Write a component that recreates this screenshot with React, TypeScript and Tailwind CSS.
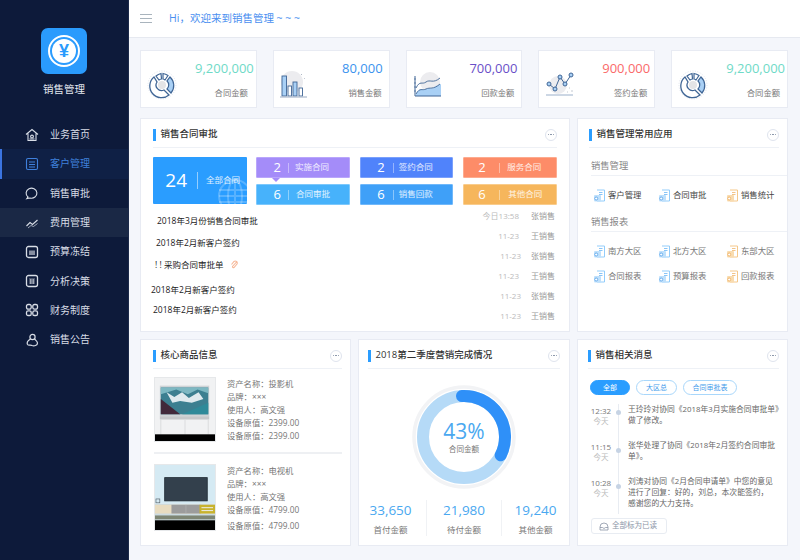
import type { ReactNode } from "react";

const cn = "font-['Open_Sans','Noto_Sans_CJK_SC',sans-serif]";

const Gauge = () => (
  <svg width="30" height="30" viewBox="0 0 30 30" fill="none">
    <circle cx="15" cy="15" r="14" stroke="#c9d2e0" strokeWidth="0.6" strokeDasharray="1 1.5" />
    <path d="M7 7 A11.5 11.5 0 0 0 22 25 L17 20 A5.5 5.5 0 0 1 10 12 Z" stroke="#3f6595" strokeWidth="1.3" fill="#fff" />
    <path d="M9 6 A11.5 11.5 0 0 1 14 3.5 L14.5 9 A5.5 5.5 0 0 0 12 10 Z" stroke="#3f6595" strokeWidth="1.2" />
    <path d="M16 3.5 A11.5 11.5 0 0 1 21 5.5 L18 10 A5.5 5.5 0 0 0 16 9 Z" stroke="#3f6595" strokeWidth="1.2" />
    <path d="M23 7 A11.5 11.5 0 0 1 24 23 L20 19 A5.5 5.5 0 0 0 20 11 Z" stroke="#3f6595" strokeWidth="1.2" fill="#a9d0f5" />
    <circle cx="15" cy="15" r="4" fill="#e4e4e6" />
  </svg>
);

const Bars = () => (
  <svg width="30" height="30" viewBox="3 0 30 30" fill="none">
    <circle cx="15" cy="12" r="11" fill="#ececef" />
    <path d="M24 4l.8.8M27 8l.6.6" stroke="#9aa7b8" strokeWidth="1" />
    <rect x="5" y="6" width="4.5" height="20" fill="#a9d0f5" stroke="#3f6595" strokeWidth="0.9" />
    <rect x="11" y="16" width="3.5" height="10" fill="#fff" stroke="#3f6595" strokeWidth="0.9" />
    <rect x="16" y="12" width="4" height="14" fill="#a9d0f5" stroke="#3f6595" strokeWidth="0.9" />
    <rect x="22" y="18" width="3.5" height="8" fill="#fff" stroke="#3f6595" strokeWidth="0.9" />
    <path d="M3 27h27" stroke="#aab8cc" strokeWidth="1.2" />
  </svg>
);

const Area = () => (
  <svg width="30" height="30" viewBox="0 0 30 30" fill="none">
    <circle cx="17" cy="12" r="10" fill="#ececef" />
    <path d="M3 24 C7 17 9 21 13 19 C17 17 20 20 23 16 L28 14 V26 H3 Z" fill="#a9d0f5" />
    <path d="M3 18 C7 10 9 15 13 12 C17 9 20 14 27 8" stroke="#3f6595" strokeWidth="0.9" />
    <path d="M3 24 C7 17 9 21 13 19 C17 17 20 20 27 14" stroke="#3f6595" strokeWidth="0.9" />
    <path d="M2 6 V26 H28" stroke="#3f6595" strokeWidth="1" />
    <path d="M1 9h2M1 13h2M1 17h2M1 21h2" stroke="#3f6595" strokeWidth="0.7" />
  </svg>
);

const Dots = () => (
  <svg width="30" height="30" viewBox="0 0 30 30" fill="none">
    <circle cx="13" cy="15" r="9" fill="#ececef" />
    <path d="M4 14 L10 19 L15 7 L20 14 L26 5" stroke="#3f6595" strokeWidth="1" />
    <circle cx="4" cy="14" r="2" fill="#a9d0f5" stroke="#3f6595" />
    <circle cx="10" cy="19" r="2" fill="#a9d0f5" stroke="#3f6595" />
    <circle cx="15" cy="7" r="2" fill="#a9d0f5" stroke="#3f6595" />
    <circle cx="20" cy="14" r="2" fill="#a9d0f5" stroke="#3f6595" />
    <circle cx="26" cy="5" r="2" fill="#a9d0f5" stroke="#3f6595" />
    <path d="M1 25h27" stroke="#8fa6c4" strokeWidth="0.9" />
    <path d="M24 18h1M26 21h2M22 22h1" stroke="#b5bcc8" strokeWidth="0.8" />
  </svg>
);

const stats = [
  { v: "9,200,000", c: "text-[#6fdac7]", l: "合同金额", icon: <Gauge />, pr: "pr-[2px]", lp: "pr-[6px]" },
  { v: "80,000", c: "text-[#3b93ee]", l: "销售金额", icon: <Bars />, pr: "pr-[6px]", lp: "pr-[1px]" },
  { v: "700,000", c: "text-[#6a4fc8]", l: "回款金额", icon: <Area />, pr: "pr-[4px]", lp: "pr-[3px]" },
  { v: "900,000", c: "text-[#fa6a6a]", l: "签约金额", icon: <Dots />, pr: "pr-[4px]", lp: "pr-[3px]" },
  { v: "9,200,000", c: "text-[#6fdac7]", l: "合同金额", icon: <Gauge />, pr: "pr-[2px]", lp: "pr-[5px]" },
];

const s = { width: 14, height: 14, viewBox: "0 0 14 14", fill: "none", stroke: "currentColor", strokeWidth: 1.1 };

const menu: { t: string; icon: ReactNode; cls?: string }[] = [
  {
    t: "业务首页",
    icon: (
      <svg {...s}>
        <path d="M1 6.5 L7 1.5 L13 6.5 M3 5.5 V12.5 H11 V5.5" />
        <circle cx="7" cy="8.5" r="1.4" />
        <path d="M4.5 11h5" />
      </svg>
    ),
  },
  {
    t: "客户管理",
    cls: "bg-[#0f2045] text-[#3f80dc] border-l-2 border-[#3b74e0] pl-[23px]",
    icon: (
      <svg {...s}>
        <rect x="1.5" y="1.5" width="11" height="11" rx="1.5" />
        <path d="M4 5h6M4 7.5h6M4 10h6" />
      </svg>
    ),
  },
  {
    t: "销售审批",
    cls: "pl-[25px]",
    icon: (
      <svg {...s}>
        <path d="M3 11 A5.4 5 0 1 1 5 12 L1.8 12.6 Z" />
      </svg>
    ),
  },
  {
    t: "费用管理",
    cls: "bg-[#1a2845] pl-[25px]",
    icon: (
      <svg {...s}>
        <path d="M1.5 10 L5 6.5 L7.5 8.5 L12.5 4" />
        <path d="M3 12 L6 9.5 L8.5 10.5 L12.5 7.5" strokeWidth="0.7" />
      </svg>
    ),
  },
  {
    t: "预算冻结",
    cls: "pl-[25px]",
    icon: (
      <svg {...s}>
        <rect x="1.5" y="1.5" width="11" height="11" rx="2" strokeWidth="1.3" />
        <rect x="4" y="5.5" width="6" height="4.5" fill="currentColor" stroke="none" opacity=".6" />
      </svg>
    ),
  },
  {
    t: "分析决策",
    cls: "pl-[25px]",
    icon: (
      <svg {...s}>
        <rect x="1.5" y="1.5" width="11" height="11" rx="2" strokeWidth="1.3" />
        <path d="M4 5h6M4 7h6M4 9h6M5.5 5v5M7 5v5M8.5 5v5" strokeWidth="0.6" />
      </svg>
    ),
  },
  {
    t: "财务制度",
    cls: "pl-[25px]",
    icon: (
      <svg {...s} strokeWidth={1.3}>
        <rect x="1.5" y="1.5" width="4.7" height="4.7" rx="1.6" />
        <rect x="7.8" y="1.5" width="4.7" height="4.7" rx="1.6" />
        <rect x="1.5" y="7.8" width="4.7" height="4.7" rx="1.6" />
        <rect x="7.8" y="7.8" width="4.7" height="4.7" rx="1.6" />
      </svg>
    ),
  },
  {
    t: "销售公告",
    cls: "pl-[25px]",
    icon: (
      <svg {...s} strokeWidth={1.2}>
        <circle cx="7.5" cy="4" r="2.6" />
        <path d="M5.5 6 C3 7.5 1.5 9.5 2.5 11.5 C3.5 12.8 5.5 11.5 7 12.5 C9 13.5 12.5 12.5 12.5 10 C12.5 8.5 11 7.5 9.5 6" />
      </svg>
    ),
  },
];

const Card = ({ title, children, className = "", mx = "mx-3" }: { title: string; children: ReactNode; className?: string; mx?: string }) => (
  <div className={"bg-white border border-[#e8ebf3] " + className}>
    <div className={"flex items-center justify-between h-[29px] pt-[3px] border-b border-[#eef1f6] " + mx}>
      <div className="flex items-center">
        <span className="w-[3px] h-[12px] bg-[#2a9dff] mr-[4.5px]" />
        <span className="text-[9.5px] font-medium text-[#333]">{title}</span>
      </div>
      <span className="w-[12px] h-[12px] rounded-full border border-[#dfe4ee] text-[#7d8aa0] flex items-center justify-center gap-[1px]">
        <i className="w-[1.5px] h-[1.5px] rounded-full bg-current" />
        <i className="w-[1.5px] h-[1.5px] rounded-full bg-current" />
        <i className="w-[1.5px] h-[1.5px] rounded-full bg-current" />
      </span>
    </div>
    {children}
  </div>
);

const tiles = [
  { n: "2", t: "实施合同", c: "bg-[#a48cf9] border-[#b9a6fb]", a: "w-[31px] text-right pr-[7px]", b: "ml-[6px]" },
  { n: "2", t: "签约合同", c: "bg-[#5083fb] border-[#7aa0fc]", a: "w-[32px] text-right pr-[8px]", b: "ml-[5px]" },
  { n: "2", t: "服务合同", c: "bg-[#fd8c68] border-[#fdab8f]", a: "w-[35px] text-left pl-[14px]", b: "ml-[7px]" },
  { n: "6", t: "合同审批", c: "bg-[#47b2fb] border-[#7cc8fc]", a: "w-[31px] text-right pr-[7px]", b: "ml-[7px]" },
  { n: "6", t: "销售回款", c: "bg-[#3fa0f8] border-[#70b8fa]", a: "w-[32px] text-right pr-[8px]", b: "ml-[5px]" },
  { n: "6", t: "其他合同", c: "bg-[#f6b65c] border-[#f9cc8c]", a: "w-[35px] text-left pl-[14px]", b: "ml-[8px]" },
];

const leftRows = [
  { t: "2018年3月份销售合同审批", c: "ml-[16px] mt-[9px]" },
  { t: "2018年2月新客户签约", c: "ml-[15px] mt-[9px]" },
  { t: "! ! 采购合同审批单", c: "ml-[14px] mt-[9px]", clip: true },
  { t: "2018年2月新客户签约", c: "ml-[10px] mt-[12px]" },
  { t: "2018年2月新客户签约", c: "ml-[12px] mt-[7px]" },
];

const rightRows = [
  { d: "今日13:58", n: "张销售", w: "pr-[12px]" },
  { d: "11-23", n: "王销售", w: "pr-[12px]" },
  { d: "11-23", n: "张销售", w: "pr-[10px]" },
  { d: "11-23", n: "王销售", w: "pr-[12px]" },
  { d: "11-23", n: "张销售", w: "pr-[10px]" },
  { d: "11-23", n: "王销售", w: "pr-[10px]" },
];

const DocIcon = ({ warm }: { warm?: boolean }) => (
  <svg width="13" height="13" viewBox="0 0 13 13" fill="none">
    <path d="M4 1h7.5v11H4" stroke={warm ? "#f5c88a" : "#93cdfb"} strokeWidth="1" />
    <path d="M6 3.5h3.5M6 5.5h3.5" stroke={warm ? "#f0b56a" : "#6bb6f5"} strokeWidth="0.8" />
    <rect x="1" y="6" width="7" height="6.5" rx="1" fill={warm ? "#f9dcb0" : "#bfe0fb"} />
    <circle cx="3.2" cy="9.5" r="1.5" fill="#fff" stroke={warm ? "#eda955" : "#4f9ee8"} strokeWidth="0.8" />
  </svg>
);

const App1 = ({ t, warm, strong, w }: { t: string; warm?: boolean; strong?: boolean; w: string }) => (
  <div className={"flex items-center " + w}>
    <DocIcon warm={warm} />
    <span className={"ml-[2px] text-[8.4px] " + (strong ? "text-[#444]" : "text-[#777]")}>{t}</span>
  </div>
);

const Projector = () => (
  <svg className="block" width="60" height="63" viewBox="0 0 62 66" preserveAspectRatio="none">
    <rect width="62" height="66" fill="#f1f2f3" />
    <rect x="5" y="8" width="51" height="32" fill="#cfd3d6" />
    <rect x="6" y="10" width="49" height="28" fill="#3c7f90" />
    <path d="M6 10 H55 V16 L44 12 L34 17 L22 12 L6 17 Z" fill="#7db8c2" />
    <path d="M6 22 L26 38 H6 Z" fill="#41293a" />
    <path d="M12 15 L20 20 L28 15 L35 21 L45 15 L50 22 L38 26 L26 24 L18 26 Z" fill="#dfeaee" />
    <path d="M28 38 L55 26 V38 Z" fill="#2f8a99" />
    <rect x="5" y="40" width="51" height="3.5" fill="#c6c8ca" />
    <path d="M6 44v15M31 44v15M55 44v15" stroke="#dadcdd" strokeWidth="1" />
    <rect y="59" width="62" height="7" fill="#000" />
  </svg>
);

const Tv = () => (
  <svg className="block" width="60" height="65" viewBox="0 0 62 67" preserveAspectRatio="none">
    <rect width="62" height="40" fill="#d5eaf3" />
    <rect y="40" width="62" height="18" fill="#ccdbe1" />
    <rect x="10" y="13" width="44" height="24" fill="#33404c" stroke="#1d2730" strokeWidth="0.8" />
    <rect x="1" y="35" width="4" height="4" fill="none" stroke="#48525a" strokeWidth="0.6" />
    <rect y="41" width="62" height="9" fill="#e8dcc0" />
    <rect x="17" y="41" width="30" height="9" fill="#9c9c9c" />
    <path d="M32 41v9" stroke="#bbb" strokeWidth="0.5" />
    <rect x="46" y="41" width="16" height="9" fill="#c8b32d" />
    <path d="M48 44h12M48 47h12" stroke="#eee" strokeWidth="1" />
    <rect y="52" width="62" height="4" fill="#7e8674" />
    <rect y="57" width="62" height="10" fill="#000" />
  </svg>
);

const Goods = ({ name, price, pic, last, lastGap }: { name: string; price: string; pic: ReactNode; last?: boolean; lastGap: string }) => (
  <div className={"flex ml-[13px] mr-[8px] " + (last ? "pt-[10px]" : "pt-[8px] pb-[10px] border-b-2 border-[#eef0f3]")}>
    <div className="border border-[#e6e8ea] w-[62px] h-fit overflow-hidden">{pic}</div>
    <div className="ml-[11px] text-[8.3px] text-[#777] leading-[13px]">
      <p>资产名称：{name}</p>
      <p>品牌：×××</p>
      <p>使用人：高文强</p>
      <p>设备原值：{price}</p>
      <p className={lastGap}>设备原值：{price}</p>
    </div>
  </div>
);

const msgs = [
  { time: "12:32", h: "h-[36px]", dot: "top-[6px]", lines: ["王玲玲对协同《2018年3月实施合同审批单》", "做了修改。"] },
  { time: "11:15", h: "h-[36px]", dot: "top-[8px]", lines: ["张华处理了协同《2018年2月签约合同审批", "单》。"] },
  { time: "10:28", h: "h-[38px]", dot: "top-[8px]", lines: ["刘涛对协同《2月合同申请单》中您的意见", "进行了回复：好的，刘总，本次能签约，", "感谢您的大力支持。"] },
];

const totals = [
  { v: "33,650", l: "首付金额", c: "pr-[4px]" },
  { v: "21,980", l: "待付金额", c: "border-l border-[#f0f2f5]" },
  { v: "19,240", l: "其他金额", c: "border-l border-[#f0f2f5]" },
];

export default function App() {
  return (
    <div className={"w-[800px] h-[560px] overflow-hidden flex bg-[#f4f6fb] " + cn}>
      <aside className="w-[129px] shrink-0 bg-[#0d1a3a] border-r border-[#1c2a4a] text-[#d8dde6]">
        <div className="flex flex-col items-center pt-[28px]">
          <div className="w-[46px] h-[46px] rounded-[7px] bg-[#2a9bfd] flex items-center justify-center">
            <div className="w-[32px] h-[32px] rounded-full border-2 border-white flex items-center justify-center p-[2px]">
              <div className="w-full h-full rounded-full bg-white text-[#2a9bfd] text-[18px] font-bold flex items-center justify-center leading-none font-['Liberation_Sans',sans-serif]">
                ¥
              </div>
            </div>
          </div>
          <p className="mt-[8px] text-[10.5px] leading-[14px] text-[#e4e8ef]">销售管理</p>
        </div>
        <nav className="mt-[24px]">
          {menu.map((m) => (
            <div key={m.t} className={"h-[29.3px] flex items-center " + (m.cls ?? "pl-[25px]")}>
              {m.icon}
              <span className="ml-[11px] text-[10px]">{m.t}</span>
            </div>
          ))}
        </nav>
      </aside>

      <div className="flex-1 min-w-0">
        <header className="h-[38px] bg-white border-b border-[#e6e9f0] flex items-center pl-[11px]">
          <div className="w-[12px] flex flex-col gap-[2.5px]">
            <i className="h-[1.5px] bg-[#a9b4bd]" />
            <i className="h-[1.5px] bg-[#a9b4bd]" />
            <i className="h-[1.5px] bg-[#a9b4bd]" />
          </div>
          <span className="ml-[17px] text-[10.5px] text-[#4a8ff0]">Hi，欢迎来到销售管理 ~ ~ ~</span>
        </header>

        <main className="pl-[11px] pr-[12px] pt-[12px]">
          <div className="grid grid-cols-5 gap-4">
            {stats.map((x, i) => (
              <div key={i} className={"h-[58px] bg-white border border-[#e8ebf3] flex justify-between pl-[6px] " + x.pr}>
                <div className="pt-[19px]">{x.icon}</div>
                <div className="text-right">
                  <p className={"text-[13px] leading-[20px] mt-[7px] " + x.c}>{x.v}</p>
                  <p className={"text-[8.3px] leading-[12px] mt-[9px] text-[#777] " + x.lp}>{x.l}</p>
                </div>
              </div>
            ))}
          </div>

          <div className="grid grid-cols-[430px_211px] gap-[7px] mt-[10px]">
            <Card title="销售合同审批" className="h-[214px]">
              <div className="flex mt-[9px] px-[12px] gap-[9px]">
                <div className="relative w-[94px] h-[47px] bg-[#2a9dff] rounded-[1px] overflow-hidden flex items-center text-white">
                  <span className="w-[34px] text-right text-[19px] leading-none">24</span>
                  <i className="w-px h-[17px] bg-white/50 ml-[10px]" />
                  <span className="ml-[8px] text-[8.5px] text-white/85">全部合同</span>
                  <svg className="absolute right-[-6px] bottom-[-10px]" width="36" height="36" viewBox="0 0 36 36" fill="none" stroke="#fff" strokeOpacity=".22" strokeWidth="2">
                    <circle cx="18" cy="18" r="16" />
                    <ellipse cx="18" cy="18" rx="7" ry="16" />
                    <path d="M2 12h32M2 18h32M2 24h32M18 2v32" />
                  </svg>
                </div>
                <div className="relative flex-1 grid grid-cols-3 grid-rows-2 gap-x-[10px] gap-y-[6px] h-[48px]">
                  {tiles.map((x) => (
                    <div key={x.t + x.n} className={"flex items-center text-white border rounded-[1px] " + x.c}>
                      <span className={"text-[13px] leading-none " + x.a}>{x.n}</span>
                      <i className="w-px h-[10px] bg-white/40" />
                      <span className={"text-[8.5px] text-white/85 " + x.b}>{x.t}</span>
                    </div>
                  ))}
                  <i className="absolute left-[16px] top-[21px] border-x-[4px] border-x-transparent border-t-[4px] border-t-[#a48cf9]" />
                </div>
              </div>
              <div className="flex justify-between">
                <div className="text-[8.5px] leading-[13px] text-[#222]">
                  {leftRows.map((r, i) => (
                    <div key={i} className={"flex items-center " + r.c}>
                      {r.t}
                      {r.clip && (
                        <svg className="ml-[7px]" width="8" height="9" viewBox="0 0 8 9" fill="none" stroke="#f6b99a" strokeWidth="1.1">
                          <path d="M6.5 2 L2.5 6.5 A1 1 0 0 0 4 7.5 L7 4 A2 2 0 0 0 4 1.5 L1.5 4.5" />
                        </svg>
                      )}
                    </div>
                  ))}
                </div>
                <div className="w-[120px] mt-[5px] mr-[14px] text-[8px] leading-[12px] text-[#aaa]">
                  {rightRows.map((r, i) => (
                    <div key={i} className="flex justify-end mb-[8px]">
                      <span className={"text-[#bbb] " + r.w}>{r.d}</span>
                      <span className="text-[#999]">{r.n}</span>
                    </div>
                  ))}
                </div>
              </div>
            </Card>

            <Card title="销售管理常用应用" className="h-[214px] overflow-hidden" mx="ml-[11px] mr-[8px]">
              <div className="pl-[13px]">
                <p className="text-[9.3px] text-[#888] leading-[13px] mt-[11px]">销售管理</p>
                <div className="border-b border-[#eef1f6] mt-[3px]" />
                <div className="flex mt-[13px] pl-[2px]">
                  <App1 t="客户管理" strong w="w-[65px]" />
                  <App1 t="合同审批" strong w="w-[68px]" />
                  <App1 t="销售统计" warm strong w="w-[60px]" />
                </div>
                <p className="text-[9.3px] text-[#888] leading-[13px] mt-[13px]">销售报表</p>
                <div className="border-b border-[#eef1f6] mt-[3px]" />
                <div className="flex mt-[13px] pl-[2px]">
                  <App1 t="南方大区" w="w-[65px]" />
                  <App1 t="北方大区" w="w-[68px]" />
                  <App1 t="东部大区" warm w="w-[60px]" />
                </div>
                <div className="flex mt-[12px] pl-[2px]">
                  <App1 t="合同报表" w="w-[65px]" />
                  <App1 t="预算报表" w="w-[68px]" />
                  <App1 t="回款报表" warm w="w-[60px]" />
                </div>
              </div>
            </Card>
          </div>

          <div className="grid grid-cols-[211px_212px_211px] gap-[7px] mt-[7px]">
            <Card title="核心商品信息" className="h-[207px]" mx="ml-[12px] mr-[8px]">
              <Goods name="投影机" price="2399.00" pic={<Projector />} lastGap="mt-[0px]" />
              <Goods name="电视机" price="4799.00" pic={<Tv />} last lastGap="mt-[3px]" />
            </Card>

            <Card title="2018第二季度营销完成情况" className="h-[207px]" mx="mx-[9px]">
              <div className="relative w-[110px] h-[110px] mx-auto mt-[13px]">
                <svg width="110" height="110" viewBox="0 0 110 110" fill="none">
                  <circle cx="55" cy="55" r="50" stroke="#f2f3f5" strokeWidth="3.5" />
                  <circle cx="55" cy="55" r="41" stroke="#b5daf7" strokeWidth="12" />
                  <path d="M53 14 A41 41 0 0 1 91.7 73.3" stroke="#2f90f8" strokeWidth="12" strokeLinecap="round" />
                </svg>
                <div className="absolute inset-0 flex flex-col items-center justify-center text-center">
                  <p className="text-[21px] leading-[24px] text-[#4aa8f0]">43%</p>
                  <p className="text-[7.6px] leading-[12px] text-[#777]">合同金额</p>
                </div>
              </div>
              <div className="grid grid-cols-[67px_75px_68px] mt-[8px]">
                {totals.map((x) => (
                  <div key={x.v} className={"text-center " + x.c}>
                    <p className="text-[13.5px] leading-[20px] text-[#4aa8f0]">{x.v}</p>
                    <p className="text-[8.5px] leading-[12px] mt-[4px] text-[#777]">{x.l}</p>
                  </div>
                ))}
              </div>
            </Card>

            <Card title="销售相关消息" className="h-[207px]" mx="ml-[10px] mr-[8px]">
              <div className="flex gap-[6px] ml-[12px] mt-[11px] text-[7px] leading-[13px]">
                <span className="w-[40px] text-center rounded-full border border-[#2a9dff] bg-[#2a9dff] text-white">全部</span>
                <span className="w-[41px] text-center rounded-full border border-[#a9d7fb] text-[#3f9bea]">大区总</span>
                <span className="w-[54px] text-center rounded-full border border-[#a9d7fb] text-[#3f9bea]">合同审批表</span>
              </div>
              <div className="mt-[9px] ml-[11px]">
                {msgs.map((m) => (
                  <div key={m.time} className={"flex " + m.h}>
                    <div className="w-[24px] text-center text-[8px] leading-[11px] pt-[1px]">
                      <p className="text-[#777]">{m.time}</p>
                      <p className="text-[#bbb] text-[7.5px]">今天</p>
                    </div>
                    <div className="relative w-px bg-[#e8ecf2] ml-[5px]">
                      <i className={"absolute left-[-2px] w-[5px] h-[5px] rounded-full bg-[#c6d3e4] " + m.dot} />
                    </div>
                    <div className="ml-[9px] text-[7.8px] leading-[11px] text-[#666] whitespace-nowrap">
                      {m.lines.map((l) => (
                        <p key={l}>{l}</p>
                      ))}
                    </div>
                  </div>
                ))}
              </div>
              <div className="ml-[13px] mt-[4px] w-[76px] h-[16px] rounded-[3px] border border-[#e8ecf2] flex items-center pl-[7px] text-[7.5px] text-[#8a94a6]">
                <svg width="10" height="9" viewBox="0 0 10 9" fill="none" stroke="#8a94a6" strokeWidth="0.8">
                  <path d="M1 5 A4 4 0 0 1 9 5 V8 H1 Z M1 5.5 H3.5 L5 6.5 L6.5 5.5 H9" />
                </svg>
                <span className="ml-[3px]">全部标为已读</span>
              </div>
            </Card>
          </div>
        </main>
      </div>
    </div>
  );
}
